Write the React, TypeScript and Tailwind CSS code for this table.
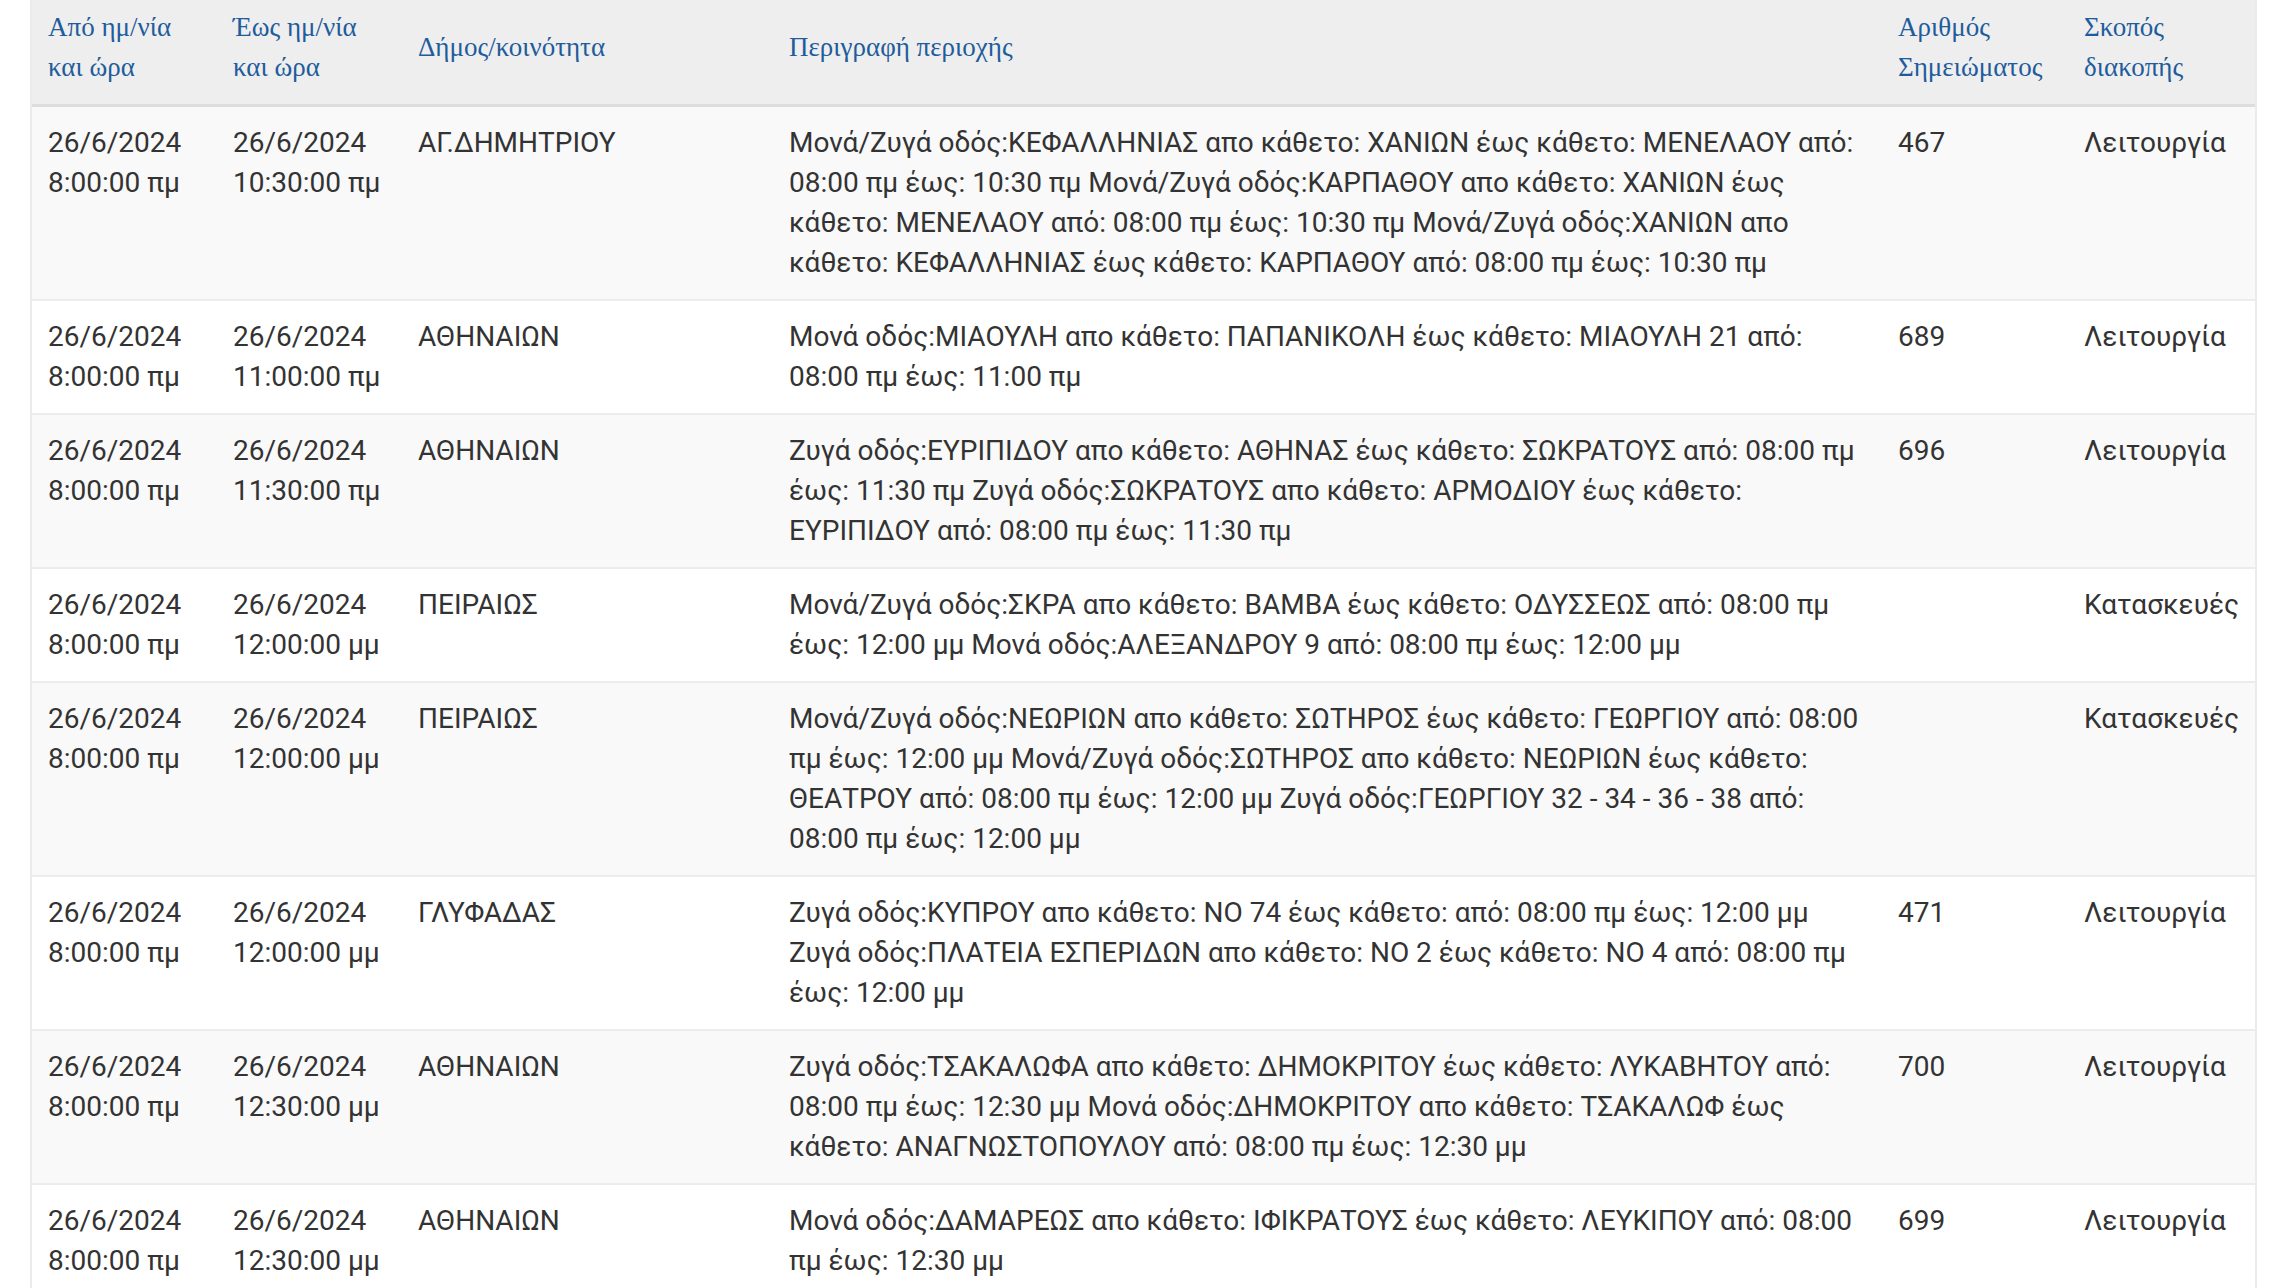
import React from "react";

type Row = {
  from: string[];
  to: string[];
  muni: string;
  desc: string;
  num: string;
  purpose: string;
};

const rows: Row[] = [
  {
    from: ["26/6/2024", "8:00:00 πμ"],
    to: ["26/6/2024", "10:30:00 πμ"],
    muni: "ΑΓ.ΔΗΜΗΤΡΙΟΥ",
    desc: "Μονά/Ζυγά οδός:ΚΕΦΑΛΛΗΝΙΑΣ απο κάθετο: ΧΑΝΙΩΝ έως κάθετο: ΜΕΝΕΛΑΟΥ από: 08:00 πμ έως: 10:30 πμ Μονά/Ζυγά οδός:ΚΑΡΠΑΘΟΥ απο κάθετο: ΧΑΝΙΩΝ έως κάθετο: ΜΕΝΕΛΑΟΥ από: 08:00 πμ έως: 10:30 πμ Μονά/Ζυγά οδός:ΧΑΝΙΩΝ απο κάθετο: ΚΕΦΑΛΛΗΝΙΑΣ έως κάθετο: ΚΑΡΠΑΘΟΥ από: 08:00 πμ έως: 10:30 πμ",
    num: "467",
    purpose: "Λειτουργία",
  },
  {
    from: ["26/6/2024", "8:00:00 πμ"],
    to: ["26/6/2024", "11:00:00 πμ"],
    muni: "ΑΘΗΝΑΙΩΝ",
    desc: "Μονά οδός:ΜΙΑΟΥΛΗ απο κάθετο: ΠΑΠΑΝΙΚΟΛΗ έως κάθετο: ΜΙΑΟΥΛΗ 21 από: 08:00 πμ έως: 11:00 πμ",
    num: "689",
    purpose: "Λειτουργία",
  },
  {
    from: ["26/6/2024", "8:00:00 πμ"],
    to: ["26/6/2024", "11:30:00 πμ"],
    muni: "ΑΘΗΝΑΙΩΝ",
    desc: "Ζυγά οδός:ΕΥΡΙΠΙΔΟΥ απο κάθετο: ΑΘΗΝΑΣ έως κάθετο: ΣΩΚΡΑΤΟΥΣ από: 08:00 πμ έως: 11:30 πμ Ζυγά οδός:ΣΩΚΡΑΤΟΥΣ απο κάθετο: ΑΡΜΟΔΙΟΥ έως κάθετο: ΕΥΡΙΠΙΔΟΥ από: 08:00 πμ έως: 11:30 πμ",
    num: "696",
    purpose: "Λειτουργία",
  },
  {
    from: ["26/6/2024", "8:00:00 πμ"],
    to: ["26/6/2024", "12:00:00 μμ"],
    muni: "ΠΕΙΡΑΙΩΣ",
    desc: "Μονά/Ζυγά οδός:ΣΚΡΑ απο κάθετο: ΒΑΜΒΑ έως κάθετο: ΟΔΥΣΣΕΩΣ από: 08:00 πμ έως: 12:00 μμ Μονά οδός:ΑΛΕΞΑΝΔΡΟΥ 9 από: 08:00 πμ έως: 12:00 μμ",
    num: "",
    purpose: "Κατασκευές",
  },
  {
    from: ["26/6/2024", "8:00:00 πμ"],
    to: ["26/6/2024", "12:00:00 μμ"],
    muni: "ΠΕΙΡΑΙΩΣ",
    desc: "Μονά/Ζυγά οδός:ΝΕΩΡΙΩΝ απο κάθετο: ΣΩΤΗΡΟΣ έως κάθετο: ΓΕΩΡΓΙΟΥ από: 08:00 πμ έως: 12:00 μμ Μονά/Ζυγά οδός:ΣΩΤΗΡΟΣ απο κάθετο: ΝΕΩΡΙΩΝ έως κάθετο: ΘΕΑΤΡΟΥ από: 08:00 πμ έως: 12:00 μμ Ζυγά οδός:ΓΕΩΡΓΙΟΥ 32 - 34 - 36 - 38 από: 08:00 πμ έως: 12:00 μμ",
    num: "",
    purpose: "Κατασκευές",
  },
  {
    from: ["26/6/2024", "8:00:00 πμ"],
    to: ["26/6/2024", "12:00:00 μμ"],
    muni: "ΓΛΥΦΑΔΑΣ",
    desc: "Ζυγά οδός:ΚΥΠΡΟΥ απο κάθετο: ΝΟ 74 έως κάθετο: από: 08:00 πμ έως: 12:00 μμ Ζυγά οδός:ΠΛΑΤΕΙΑ ΕΣΠΕΡΙΔΩΝ απο κάθετο: ΝΟ 2 έως κάθετο: ΝΟ 4 από: 08:00 πμ έως: 12:00 μμ",
    num: "471",
    purpose: "Λειτουργία",
  },
  {
    from: ["26/6/2024", "8:00:00 πμ"],
    to: ["26/6/2024", "12:30:00 μμ"],
    muni: "ΑΘΗΝΑΙΩΝ",
    desc: "Ζυγά οδός:ΤΣΑΚΑΛΩΦΑ απο κάθετο: ΔΗΜΟΚΡΙΤΟΥ έως κάθετο: ΛΥΚΑΒΗΤΟΥ από: 08:00 πμ έως: 12:30 μμ Μονά οδός:ΔΗΜΟΚΡΙΤΟΥ απο κάθετο: ΤΣΑΚΑΛΩΦ έως κάθετο: ΑΝΑΓΝΩΣΤΟΠΟΥΛΟΥ από: 08:00 πμ έως: 12:30 μμ",
    num: "700",
    purpose: "Λειτουργία",
  },
  {
    from: ["26/6/2024", "8:00:00 πμ"],
    to: ["26/6/2024", "12:30:00 μμ"],
    muni: "ΑΘΗΝΑΙΩΝ",
    desc: "Μονά οδός:ΔΑΜΑΡΕΩΣ απο κάθετο: ΙΦΙΚΡΑΤΟΥΣ έως κάθετο: ΛΕΥΚΙΠΟΥ από: 08:00 πμ έως: 12:30 μμ",
    num: "699",
    purpose: "Λειτουργία",
  },
];

const gridCols = "grid grid-cols-[185px_185px_371px_1109px_186px_187px]";

const headers = [
  "Από ημ/νία και ώρα",
  "Έως ημ/νία και ώρα",
  "Δήμος/κοινότητα",
  "Περιγραφή περιοχής",
  "Αριθμός Σημειώματος",
  "Σκοπός διακοπής",
];

export default function App() {
  return (
    <div className="h-screen w-full overflow-hidden bg-white">
      <div className="ml-[30px] w-[2227px] border-x-2 border-[#ebebeb]">
        <div
          className={`${gridCols} items-center border-b-[3px] border-[#dddddd] bg-[#eeeeee] pt-[7px] pb-[17px] text-[27px] leading-[40px] text-[#1f5c9c]`}
          style={{ fontFamily: '"Liberation Serif", "DejaVu Serif", serif' }}
        >
          {headers.map((h) => (
            <div key={h} className="px-4">
              {h}
            </div>
          ))}
        </div>
        {rows.map((r, i) => (
          <div
            key={i}
            className={`${gridCols} border-b-2 border-[#ececec] text-[28px] leading-[40px] text-[#333333] ${
              i % 2 === 0 ? "bg-[#f9f9f9]" : "bg-white"
            }`}
            style={{ fontFamily: 'Roboto, "Noto Sans", sans-serif' }}
          >
            <div className="px-4 py-4">
              {r.from[0]}
              <br />
              {r.from[1]}
            </div>
            <div className="px-4 py-4">
              {r.to[0]}
              <br />
              {r.to[1]}
            </div>
            <div className="px-4 py-4">{r.muni}</div>
            <div className="px-4 py-4">{r.desc}</div>
            <div className="px-4 py-4">{r.num}</div>
            <div className="px-4 py-4">{r.purpose}</div>
          </div>
        ))}
      </div>
    </div>
  );
}
